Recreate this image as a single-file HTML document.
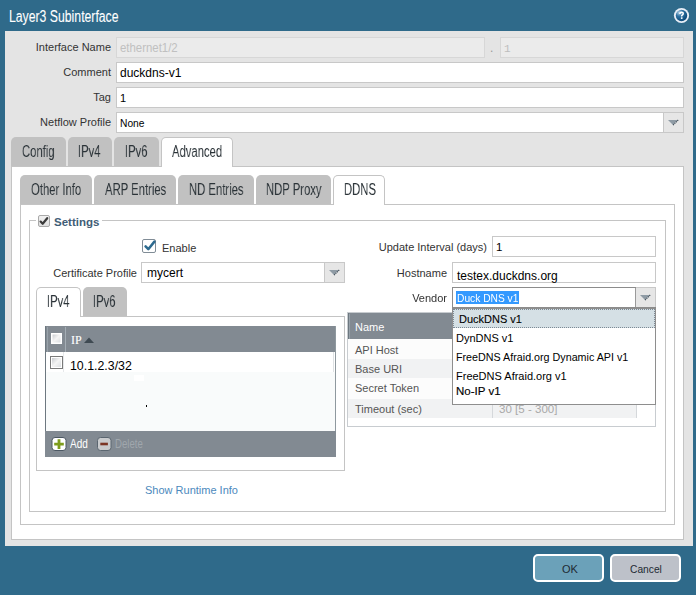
<!DOCTYPE html>
<html><head><meta charset="utf-8">
<style>
html,body{margin:0;padding:0;}
body{width:696px;height:595px;background:#2f6a8a;position:relative;overflow:hidden;font-family:"Liberation Sans",sans-serif;}
.a{position:absolute;box-sizing:border-box;}
.t{position:absolute;white-space:nowrap;line-height:1;transform-origin:0 0;}
</style></head><body>

<div class="t" style="left:9px;top:9.46px;font-size:16px;color:#fff;transform:scaleX(0.765);-webkit-text-stroke:0.1px #fff;">Layer3 Subinterface</div>
<svg class="a" style="left:673px;top:7px" width="17" height="17" viewBox="0 0 17 17">
  <defs><radialGradient id="hg" cx="0.3" cy="0.25" r="0.8"><stop offset="0" stop-color="#b5d3ea"/><stop offset="0.4" stop-color="#2f72a2"/><stop offset="1" stop-color="#0a4878"/></radialGradient></defs>
  <circle cx="8.5" cy="8.5" r="7.6" fill="#e8eef7"/>
  <circle cx="8.5" cy="8.5" r="5.7" fill="url(#hg)"/>
  <path d="M6.9 7.0 Q6.9 5.2 8.6 5.2 Q10.3 5.3 10.2 6.7 Q10.1 7.6 9.2 8.1 Q8.6 8.5 8.6 9.4" stroke="#fff" stroke-width="1.5" fill="none"/>
  <rect x="7.9" y="10.3" width="1.6" height="1.6" fill="#fff"/>
</svg>
<div class="a" style="left:5px;top:31px;width:688px;height:515px;background:#e4e4e4;"></div>
<div class="t" style="left:-289px;width:400px;text-align:right;top:41.69px;font-size:11px;color:#333;">Interface Name</div>
<div class="a" style="left:116px;top:37px;width:369px;height:21px;background:#ebebeb;border:1px solid #d7d7d7;"></div>
<div class="t" style="left:120px;top:41.84px;font-size:12px;color:#c0c0c0;transform:scaleX(0.95);">ethernet1/2</div>
<div class="t" style="left:490px;top:41.84px;font-size:12px;color:#9a9a9a;">.</div>
<div class="a" style="left:500px;top:37px;width:184px;height:21px;background:#ebebeb;border:1px solid #d7d7d7;"></div>
<div class="t" style="left:504px;top:43.69px;font-size:11px;color:#bdbdbd;font-family:'Liberation Mono',monospace;">1</div>
<div class="t" style="left:-289px;width:400px;text-align:right;top:66.69px;font-size:11px;color:#333;">Comment</div>
<div class="a" style="left:116px;top:62px;width:568px;height:21px;background:#fff;border:1px solid #c8c8c8;"></div>
<div class="t" style="left:120px;top:66.84px;font-size:12px;color:#000;">duckdns-v1</div>
<div class="t" style="left:-289px;width:400px;text-align:right;top:91.69px;font-size:11px;color:#333;">Tag</div>
<div class="a" style="left:116px;top:87px;width:568px;height:21px;background:#fff;border:1px solid #c8c8c8;"></div>
<div class="t" style="left:120px;top:92.69px;font-size:11px;color:#000;">1</div>
<div class="t" style="left:-289px;width:400px;text-align:right;top:116.69px;font-size:11px;color:#333;">Netflow Profile</div>
<div class="a" style="left:116px;top:112px;width:568px;height:21px;background:#fff;border:1px solid #c8c8c8;"></div>
<div class="a" style="left:663px;top:113px;width:20px;height:19px;background:#e6e6e6;"></div>
<svg class="a" style="left:667px;top:119px" width="12" height="7"><path d="M1 1 L11 1 L6 6 Z" fill="#8f9ba5"/><path d="M11.2 1 L6 6.2" stroke="#3f4c57" stroke-width="1.1" stroke-dasharray="1.2 0.8"/></svg>
<div class="a" style="left:663px;top:113px;width:1px;height:19px;background:#c8c8c8;"></div>
<div class="t" style="left:120px;top:117.69px;font-size:11px;color:#000;transform:scaleX(0.93);">None</div>
<div class="a" style="left:11px;top:137px;width:55px;height:29px;background:#c1c1c1;border-radius:5px 5px 0 0;"></div>
<div class="t" style="left:22px;top:144.46px;font-size:16px;color:#2b3338;transform:scaleX(0.705);will-change:transform;">Config</div>
<div class="a" style="left:68px;top:137px;width:44px;height:29px;background:#c1c1c1;border-radius:5px 5px 0 0;"></div>
<div class="t" style="left:78px;top:144.46px;font-size:16px;color:#2b3338;transform:scaleX(0.705);will-change:transform;">IPv4</div>
<div class="a" style="left:114px;top:137px;width:45px;height:29px;background:#c1c1c1;border-radius:5px 5px 0 0;"></div>
<div class="t" style="left:125px;top:144.46px;font-size:16px;color:#2b3338;transform:scaleX(0.705);will-change:transform;">IPv6</div>
<div class="a" style="left:11px;top:166px;width:673px;height:374px;background:#fff;border:1px solid #c4c4c4;"></div>
<div class="a" style="left:161px;top:137px;width:72px;height:30px;background:#fff;border:1px solid #c4c4c4;border-bottom:none;border-radius:5px 5px 0 0;"></div>
<div class="t" style="left:172px;top:144.46px;font-size:16px;color:#2b3338;transform:scaleX(0.705);will-change:transform;">Advanced</div>
<div class="a" style="left:20px;top:175px;width:72px;height:29px;background:#c1c1c1;border-radius:5px 5px 0 0;"></div>
<div class="t" style="left:31px;top:182.46px;font-size:16px;color:#2b3338;transform:scaleX(0.705);will-change:transform;">Other Info</div>
<div class="a" style="left:94px;top:175px;width:82px;height:29px;background:#c1c1c1;border-radius:5px 5px 0 0;"></div>
<div class="t" style="left:105px;top:182.46px;font-size:16px;color:#2b3338;transform:scaleX(0.705);will-change:transform;">ARP Entries</div>
<div class="a" style="left:178px;top:175px;width:76px;height:29px;background:#c1c1c1;border-radius:5px 5px 0 0;"></div>
<div class="t" style="left:189px;top:182.46px;font-size:16px;color:#2b3338;transform:scaleX(0.705);will-change:transform;">ND Entries</div>
<div class="a" style="left:256px;top:175px;width:75px;height:29px;background:#c1c1c1;border-radius:5px 5px 0 0;"></div>
<div class="t" style="left:266px;top:182.46px;font-size:16px;color:#2b3338;transform:scaleX(0.705);will-change:transform;">NDP Proxy</div>
<div class="a" style="left:20px;top:204px;width:655px;height:321px;background:#fff;border:1px solid #c4c4c4;"></div>
<div class="a" style="left:333px;top:175px;width:52px;height:30px;background:#fff;border:1px solid #c4c4c4;border-bottom:none;border-radius:5px 5px 0 0;"></div>
<div class="t" style="left:344px;top:182.46px;font-size:16px;color:#2b3338;transform:scaleX(0.705);will-change:transform;">DDNS</div>
<div class="a" style="left:29px;top:220px;width:637px;height:292px;border:1px solid #c4c4c4;"></div>
<div class="a" style="left:36px;top:212px;width:66px;height:17px;background:#fff;"></div>
<svg class="a" style="left:38px;top:215px" width="12" height="12" viewBox="0 0 12 12"><defs><linearGradient id="cbg1" x1="0" y1="0" x2="0" y2="1"><stop offset="0" stop-color="#f2f2f2"/><stop offset="1" stop-color="#dedede"/></linearGradient></defs><rect x="0.5" y="0.5" width="11" height="11" rx="1.5" fill="url(#cbg1)" stroke="#a9a9a9"/><path d="M2.6 6.6 L4.7 8.8 L9.2 3.2" stroke="#3a3a3a" stroke-width="2.2" fill="none" stroke-linecap="round" stroke-linejoin="round"/></svg>
<div class="t" style="left:54px;top:217.27px;font-size:11.5px;color:#3f5d76;font-weight:bold;">Settings</div>
<svg class="a" style="left:142px;top:239px" width="14" height="14" viewBox="0 0 14 14"><rect x="0.5" y="0.5" width="13" height="13" rx="1.5" fill="#fff" stroke="#808c96"/><path d="M3.6 7.4 L6.3 10.2 L12.4 2.6" stroke="#2d6a8f" stroke-width="2.5" fill="none" stroke-linecap="round" stroke-linejoin="round"/></svg>
<div class="t" style="left:162px;top:242.69px;font-size:11px;color:#333;">Enable</div>
<div class="t" style="left:-263px;width:400px;text-align:right;top:267.69px;font-size:11px;color:#333;">Certificate Profile</div>
<div class="a" style="left:141px;top:262px;width:204px;height:21px;background:#fff;border:1px solid #c8c8c8;"></div>
<div class="a" style="left:324px;top:263px;width:20px;height:19px;background:#e6e6e6;"></div>
<svg class="a" style="left:328px;top:269px" width="12" height="7"><path d="M1 1 L11 1 L6 6 Z" fill="#8f9ba5"/><path d="M11.2 1 L6 6.2" stroke="#3f4c57" stroke-width="1.1" stroke-dasharray="1.2 0.8"/></svg>
<div class="a" style="left:324px;top:263px;width:1px;height:19px;background:#c8c8c8;"></div>
<div class="t" style="left:147px;top:266.84px;font-size:12px;color:#000;">mycert</div>
<div class="a" style="left:83px;top:287px;width:44px;height:29px;background:#c1c1c1;border-radius:5px 5px 0 0;"></div>
<div class="t" style="left:93px;top:294.46px;font-size:16px;color:#2b3338;transform:scaleX(0.705);will-change:transform;">IPv6</div>
<div class="a" style="left:36px;top:316px;width:309px;height:155px;border:1px solid #c4c4c4;"></div>
<div class="a" style="left:36px;top:287px;width:45px;height:30px;background:#fff;border:1px solid #c4c4c4;border-bottom:none;border-radius:5px 5px 0 0;"></div>
<div class="t" style="left:47px;top:294.46px;font-size:16px;color:#2b3338;transform:scaleX(0.705);will-change:transform;">IPv4</div>
<div class="a" style="left:45px;top:326px;width:291px;height:131px;background:#f9fbfb;"></div>
<div class="a" style="left:45px;top:326px;width:291px;height:26px;background:#828a92;"></div>
<div class="a" style="left:45px;top:326px;width:1px;height:131px;background:#6d7880;"></div>
<div class="a" style="left:335px;top:326px;width:1px;height:131px;background:#8f999f;"></div>
<div class="a" style="left:47px;top:327px;width:1px;height:25px;background:#98a2aa;"></div>
<div class="a" style="left:65px;top:327px;width:1px;height:25px;background:#a4adb4;"></div>
<svg class="a" style="left:51px;top:333px" width="11" height="11" viewBox="0 0 11 11"><defs><linearGradient id="cbt51333" x1="0" y1="0" x2="1" y2="1"><stop offset="0" stop-color="#c9ccd0"/><stop offset="0.5" stop-color="#f4f4f4"/><stop offset="1" stop-color="#dcdfe2"/></linearGradient></defs><rect x="0.5" y="0.5" width="10" height="10" fill="#fff" stroke="#ffffff"/><rect x="1.5" y="1.5" width="8" height="8" fill="url(#cbt51333)"/></svg>
<div class="t" style="left:71px;top:333.84px;font-size:12px;color:#fff;font-family:'Liberation Serif',serif;-webkit-text-stroke:0.1px #fff;">IP</div>
<svg class="a" style="left:84px;top:337px" width="11" height="7"><path d="M0 6 L5 0.5 L10 6 Z" fill="#3f4a52"/></svg>
<div class="a" style="left:46px;top:352px;width:289px;height:20px;background:#fff;"></div>
<div class="a" style="left:63px;top:352px;width:1px;height:20px;background:#e6e8ea;"></div>
<div class="a" style="left:333px;top:352px;width:1px;height:20px;background:#dfe2e4;"></div>
<svg class="a" style="left:50px;top:356px" width="13" height="13" viewBox="0 0 13 13"><defs><linearGradient id="cbt50356" x1="0" y1="0" x2="1" y2="1"><stop offset="0" stop-color="#c9ccd0"/><stop offset="0.5" stop-color="#f4f4f4"/><stop offset="1" stop-color="#dcdfe2"/></linearGradient></defs><rect x="0.5" y="0.5" width="12" height="12" fill="#fff" stroke="#7a7a7a"/><rect x="2" y="2" width="9" height="9" fill="url(#cbt50356)"/></svg>
<div class="t" style="left:70px;top:359.84px;font-size:12px;color:#000;transform:scaleX(1.03);">10.1.2.3/32</div>
<div class="a" style="left:134px;top:375px;width:10px;height:6px;background:#fff;"></div>
<div class="a" style="left:146px;top:405px;width:1px;height:2px;background:#000;"></div>
<div class="a" style="left:45px;top:431px;width:291px;height:26px;background:#828a92;"></div>
<svg class="a" style="left:51px;top:437px" width="16" height="15" viewBox="0 0 16 15"><rect x="1" y="0.5" width="14" height="13" rx="3" fill="#fff" stroke="#4c5863"/><path d="M8 2.3 V11.9 M3.2 7.1 H12.8" stroke="#7d9c1b" stroke-width="2.8"/></svg>
<div class="t" style="left:70px;top:438.42px;font-size:12.5px;color:#fff;transform:scaleX(0.8);">Add</div>
<svg class="a" style="left:96px;top:437px" width="16" height="15" viewBox="0 0 16 15"><rect x="1.5" y="0.5" width="13.5" height="13" rx="3" fill="#c9cbcd" stroke="#5b6670"/><path d="M4.3 7 H11.9" stroke="#7b3524" stroke-width="2.6"/></svg>
<div class="t" style="left:115px;top:438.42px;font-size:12.5px;color:#a0a7ad;transform:scaleX(0.77);">Delete</div>
<div class="t" style="left:145px;top:484.69px;font-size:11px;color:#4c89bd;">Show Runtime Info</div>
<div class="t" style="left:87px;width:400px;text-align:right;top:241.69px;font-size:11px;color:#333;">Update Interval (days)</div>
<div class="a" style="left:492px;top:236px;width:164px;height:21px;background:#fff;border:1px solid #c8c8c8;"></div>
<div class="t" style="left:496px;top:242.27px;font-size:11.5px;color:#000;">1</div>
<div class="t" style="left:47px;width:400px;text-align:right;top:267.69px;font-size:11px;color:#333;">Hostname</div>
<div class="a" style="left:452px;top:262px;width:204px;height:21px;background:#fff;border:1px solid #c8c8c8;"></div>
<div class="t" style="left:457px;top:269.84px;font-size:12px;color:#000;">testex.duckdns.org</div>
<div class="t" style="left:47px;width:400px;text-align:right;top:292.69px;font-size:11px;color:#333;">Vendor</div>
<div class="a" style="left:452px;top:287px;width:204px;height:21px;background:#fff;border:1px solid #8c8c8c;"></div>
<div class="a" style="left:636px;top:287px;width:20px;height:20px;background:#e6e6e6;border:1px solid #c8c8c8;border-left:none;"></div>
<div class="a" style="left:636px;top:288px;width:19px;height:19px;background:#e6e6e6;"></div>
<svg class="a" style="left:639px;top:294px" width="12" height="7"><path d="M1 1 L11 1 L6 6 Z" fill="#8f9ba5"/><path d="M11.2 1 L6 6.2" stroke="#3f4c57" stroke-width="1.1" stroke-dasharray="1.2 0.8"/></svg>
<div class="a" style="left:635px;top:288px;width:1px;height:19px;background:#9a9a9a;"></div>
<div class="a" style="left:456px;top:291px;width:63px;height:13px;background:#3399ff;"></div>
<div class="t" style="left:457px;top:292.69px;font-size:11px;color:#fff;transform:scaleX(0.93);">Duck DNS v1</div>
<div class="a" style="left:347px;top:312px;width:309px;height:115px;border:1px solid #c8ccd0;"></div>
<div class="a" style="left:348px;top:313px;width:307px;height:26px;background:#828a92;"></div>
<div class="a" style="left:348px;top:313px;width:1px;height:26px;background:#6d7880;"></div>
<div class="a" style="left:349px;top:314px;width:1px;height:25px;background:#98a2aa;"></div>
<div class="t" style="left:355px;top:321.69px;font-size:11px;color:#fff;">Name</div>
<div class="a" style="left:348px;top:339px;width:307px;height:20px;background:#fcfcfc;"></div>
<div class="a" style="left:348px;top:359px;width:307px;height:19px;background:#f1f2f3;"></div>
<div class="a" style="left:348px;top:378px;width:307px;height:21px;background:#fcfcfc;"></div>
<div class="a" style="left:348px;top:399px;width:289px;height:19px;background:#f1f2f3;"></div>
<div class="t" style="left:355px;top:344.69px;font-size:11px;color:#555;">API Host</div>
<div class="t" style="left:355px;top:363.69px;font-size:11px;color:#555;">Base URI</div>
<div class="t" style="left:355px;top:382.69px;font-size:11px;color:#555;">Secret Token</div>
<div class="t" style="left:355px;top:403.69px;font-size:11px;color:#555;">Timeout (sec)</div>
<div class="a" style="left:492px;top:399px;width:1px;height:19px;background:#d5d8db;"></div>
<div class="a" style="left:636px;top:399px;width:1px;height:19px;background:#d5d8db;"></div>
<div class="t" style="left:499px;top:403.69px;font-size:11px;color:#a9a9a9;transform:scaleX(1.05);">30 [5 - 300]</div>
<div class="a" style="left:452px;top:308px;width:204px;height:97px;background:#fff;border:1px solid #8e8e8e;"></div>
<div class="a" style="left:453px;top:309px;width:202px;height:19px;background:#d5e0e5;border:1px dotted #7d8a95;"></div>
<div class="t" style="left:459px;top:313.69px;font-size:11px;color:#000;-webkit-text-stroke:0.1px #000;">DuckDNS v1</div>
<div class="t" style="left:456px;top:332.69px;font-size:11px;color:#000;">DynDNS v1</div>
<div class="t" style="left:456px;top:351.69px;font-size:11px;color:#000;transform:scaleX(0.975);">FreeDNS Afraid.org Dynamic API v1</div>
<div class="t" style="left:456px;top:370.69px;font-size:11px;color:#000;">FreeDNS Afraid.org v1</div>
<div class="t" style="left:456px;top:386.27px;font-size:11.5px;color:#000;-webkit-text-stroke:0.15px #000;">No-IP v1</div>
<div class="a" style="left:533px;top:554px;width:71px;height:28px;background:#6ba1b9;border:2px solid #fff;border-radius:5px;"></div>
<div class="t" style="left:562px;top:563.69px;font-size:11px;color:#1e2a33;">OK</div>
<div class="a" style="left:610px;top:554px;width:71px;height:28px;background:#bdc1c9;border:2px solid #fff;border-radius:5px;"></div>
<div class="t" style="left:630px;top:563.69px;font-size:11px;color:#1e2a33;transform:scaleX(0.93);">Cancel</div>
</body></html>
